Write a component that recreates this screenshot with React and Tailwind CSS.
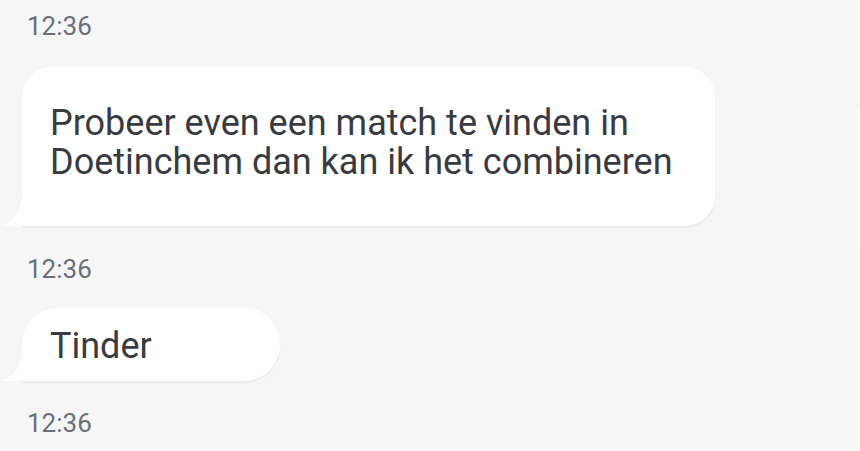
import React from "react";

function Tail({ h = 34 }) {
  return (
    <svg
      className="absolute bottom-0 left-[-22px]"
      width="24"
      height={h}
      viewBox={`0 0 24 ${h}`}
    >
      <path
        d={`M22 0 L24 0 L24 ${h} L0 ${h} C10 ${h - 2} 22 ${h - 12} 22 0 Z`}
        fill="#ffffff"
      />
    </svg>
  );
}

function Time() {
  return (
    <div className="pl-[27px] text-[26px] leading-[30px] text-[#6a7079]">12:36</div>
  );
}

export default function App() {
  return (
    <div
      className="flex h-[451px] w-[860px] overflow-hidden bg-[#f6f6f6]"
      style={{ fontFamily: "Roboto, 'Noto Sans', sans-serif" }}
    >
      <div className="flex flex-1 flex-col pt-[11px]">
        <Time />
        <div className="mt-[26px] pl-[22px]">
          <div className="relative w-[693px] rounded-[30px] rounded-bl-none bg-white pl-[28px] pt-[37px] pb-[44px] text-[36px] leading-[39px] text-[#383b42] shadow-[0_2px_2px_rgba(0,0,0,0.05)]">
            <Tail />
            <div>Probeer even een match te vinden in</div>
            <div>Doetinchem dan kan ik het combineren</div>
          </div>
        </div>
        <div className="mt-[28px]">
          <Time />
        </div>
        <div className="mt-[24px] pl-[22px]">
          <div className="relative w-[258px] rounded-[36px] rounded-bl-none bg-white pl-[28px] pt-[19px] pb-[15px] text-[36px] leading-[39px] text-[#383b42] shadow-[0_2px_2px_rgba(0,0,0,0.05)]">
            <Tail h={30} />
            <div>Tinder</div>
          </div>
        </div>
        <div className="mt-[27px]">
          <Time />
        </div>
      </div>
      <div className="w-[3px]">
        <div className="mt-[110px] h-[138px] bg-[#fcfcfc]" />
      </div>
    </div>
  );
}
